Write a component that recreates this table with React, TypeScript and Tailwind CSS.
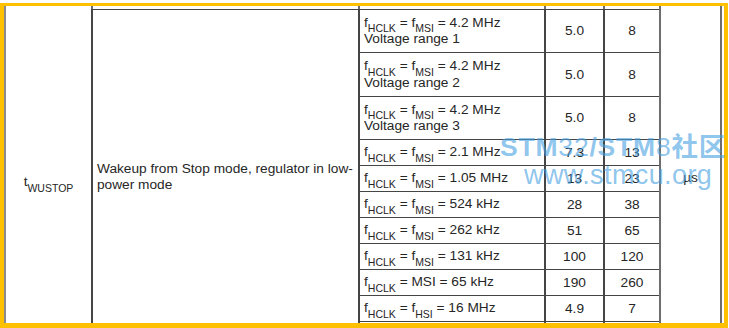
import type { ReactNode } from "react";

type Row = {
  lhs: ReactNode;
  note?: string;
  typ: string;
  max: string;
};

function F({ sub }: { sub: string }) {
  return (
    <span>
      f<sub className="text-[10.5px] align-[-3px] leading-none">{sub}</sub>
    </span>
  );
}

const rows: Row[] = [
  { lhs: <><F sub="HCLK" /> = <F sub="MSI" /> = 4.2 MHz</>, note: "Voltage range 1", typ: "5.0", max: "8" },
  { lhs: <><F sub="HCLK" /> = <F sub="MSI" /> = 4.2 MHz</>, note: "Voltage range 2", typ: "5.0", max: "8" },
  { lhs: <><F sub="HCLK" /> = <F sub="MSI" /> = 4.2 MHz</>, note: "Voltage range 3", typ: "5.0", max: "8" },
  { lhs: <><F sub="HCLK" /> = <F sub="MSI" /> = 2.1 MHz</>, typ: "7.3", max: "13" },
  { lhs: <><F sub="HCLK" /> = <F sub="MSI" /> = 1.05 MHz</>, typ: "13", max: "23" },
  { lhs: <><F sub="HCLK" /> = <F sub="MSI" /> = 524 kHz</>, typ: "28", max: "38" },
  { lhs: <><F sub="HCLK" /> = <F sub="MSI" /> = 262 kHz</>, typ: "51", max: "65" },
  { lhs: <><F sub="HCLK" /> = <F sub="MSI" /> = 131 kHz</>, typ: "100", max: "120" },
  { lhs: <><F sub="HCLK" /> = MSI = 65 kHz</>, typ: "190", max: "260" },
  { lhs: <><F sub="HCLK" /> = <F sub="HSI" /> = 16 MHz</>, typ: "4.9", max: "7" },
  { lhs: null, typ: "", max: "" },
];

const vline = "border-l-2 border-[#6e6e6e]";
const hline = "border-t border-[#454545]";

export default function App() {
  return (
    <div
      className="relative w-[729px] h-[328px] overflow-hidden bg-white pt-[3px] text-[#262626]"
      style={{ fontFamily: '"Liberation Sans", Arial, sans-serif' }}
    >
      <div className="h-[325px] w-[728px] overflow-hidden border-t-[3px] border-l-4 border-r-4 border-b-[5px] border-[#ffc000]">
        <div className="grid grid-cols-[87px_267px_186px_59px_56px_63px] grid-rows-[3px_43px_44px_43px_26px_26px_26px_26px_26px_26px_26px_10px] text-[13.7px] leading-[16px]">
          {/* symbol */}
          <div className={`row-span-12 col-start-1 row-start-1 ${vline} border-[#8a8a8a] flex justify-center pt-[168px]`}>
            <span>
              t<sub className="text-[10.5px] align-[-3px] leading-none">WUSTOP</sub>
            </span>
          </div>

          {/* parameter */}
          <div className={`col-start-2 row-start-1 ${vline}`} />
          <div className={`col-start-2 row-start-2 row-span-11 ${vline} ${hline} pl-[4px] pr-[2px] pt-[151px]`}>
            Wakeup from Stop mode, regulator in low-power mode
          </div>

          {/* spacer row for conditions / values */}
          <div className={`col-start-3 row-start-1 ${vline}`} />
          <div className={`col-start-4 row-start-1 ${vline}`} />
          <div className={`col-start-5 row-start-1 ${vline}`} />

          {rows.map((r, i) => (
            <div key={i} className="contents">
              <div
                className={`col-start-3 ${vline} ${hline} flex flex-col justify-center pl-[4px]`}
                style={{ gridRowStart: i + 2 }}
              >
                <div>{r.lhs}</div>
                {r.note && <div>{r.note}</div>}
              </div>
              <div
                className={`col-start-4 ${vline} ${hline} flex items-center justify-center`}
                style={{ gridRowStart: i + 2 }}
              >
                {r.typ}
              </div>
              <div
                className={`col-start-5 ${vline} ${hline} flex items-center justify-center`}
                style={{ gridRowStart: i + 2 }}
              >
                {r.max}
              </div>
            </div>
          ))}

          {/* unit */}
          <div className={`col-start-6 row-start-1 row-span-12 ${vline} border-r-2 border-r-[#6e6e6e] flex justify-center pt-[164px]`}>
            µs
          </div>
        </div>
      </div>

      {/* watermark */}
      <div className="pointer-events-none absolute left-[500px] top-[132px] flex flex-col text-[rgba(70,160,225,0.62)]">
        <div className="text-[26.5px] leading-[30px] tracking-[0.8px] whitespace-nowrap" style={{ fontFamily: '"Liberation Sans", "Noto Sans CJK SC", sans-serif' }}>
          <span className="font-bold">STM</span>
          <span className="font-light">32</span>
          <span className="font-bold">/STM</span>
          <span className="font-light">8</span>
          <span className="font-bold">社区</span>
        </div>
        <div className="ml-[24px] -mt-[2px] text-[27px] leading-[30px] tracking-[0.4px] font-light whitespace-nowrap">
          www.stmcu.org
        </div>
      </div>
    </div>
  );
}
